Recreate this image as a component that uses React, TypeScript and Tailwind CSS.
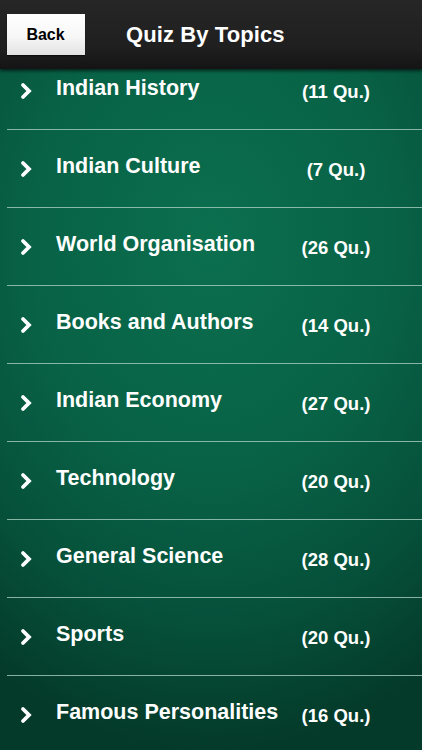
const topics = [
  { name: "Indian History", count: 11 },
  { name: "Indian Culture", count: 7 },
  { name: "World Organisation", count: 26 },
  { name: "Books and Authors", count: 14 },
  { name: "Indian Economy", count: 27 },
  { name: "Technology", count: 20 },
  { name: "General Science", count: 28 },
  { name: "Sports", count: 20 },
  { name: "Famous Personalities", count: 16 },
];

function Chevron() {
  return (
    <svg className="w-[14px] h-[18px]" viewBox="0 0 14 18" fill="none">
      <path
        d="M4 3 L10 9 L4 15"
        stroke="white"
        strokeWidth={3.8}
        strokeLinecap="round"
        strokeLinejoin="miter"
      />
    </svg>
  );
}

export default function App() {
  return (
    <div className="w-[422px] h-[750px] overflow-hidden flex flex-col font-['Liberation_Sans',Arial,sans-serif] bg-[#064a36]">
      <header className="relative z-10 h-[69px] shrink-0 flex items-center gap-[41px] pl-[7px] bg-[linear-gradient(180deg,#262626_0%,#1f1f1f_70%,#141414_100%)] shadow-[0_2px_3px_rgba(0,0,0,0.6)]">
        <button className="w-[78px] h-[41px] bg-[linear-gradient(180deg,#ffffff_0%,#f7f7f7_55%,#e2e2e2_100%)] text-black text-[16px] font-bold pr-[1px] shadow-[0_1px_1px_rgba(0,0,0,0.5)]">
          Back
        </button>
        <h1 className="text-white text-[22px] font-bold tracking-[0.1px]">Quiz By Topics</h1>
      </header>

      <div className="flex-1 overflow-hidden bg-[radial-gradient(ellipse_95%_75%_at_50%_25%,#0b6f4e_0%,#086246_45%,#06503a_75%,#043a2a_100%)]">
        <ul className="-mt-[17px]">
          {topics.map((t) => (
            <li
              key={t.name}
              className="h-[78px] ml-[7px] border-b border-[#a9cdbf]/80 flex items-center text-white"
            >
              <div className="w-[49px] flex items-center pl-[12px] pt-[1px]">
                <Chevron />
              </div>
              <span className="flex-1 text-[21.5px] font-bold leading-none -mt-[3px] whitespace-nowrap">
                {t.name}
              </span>
              <span className="w-[72px] mr-[50px] text-center text-[18.5px] font-bold leading-none mt-[3px]">
                ({t.count} Qu.)
              </span>
            </li>
          ))}
        </ul>
      </div>
    </div>
  );
}
